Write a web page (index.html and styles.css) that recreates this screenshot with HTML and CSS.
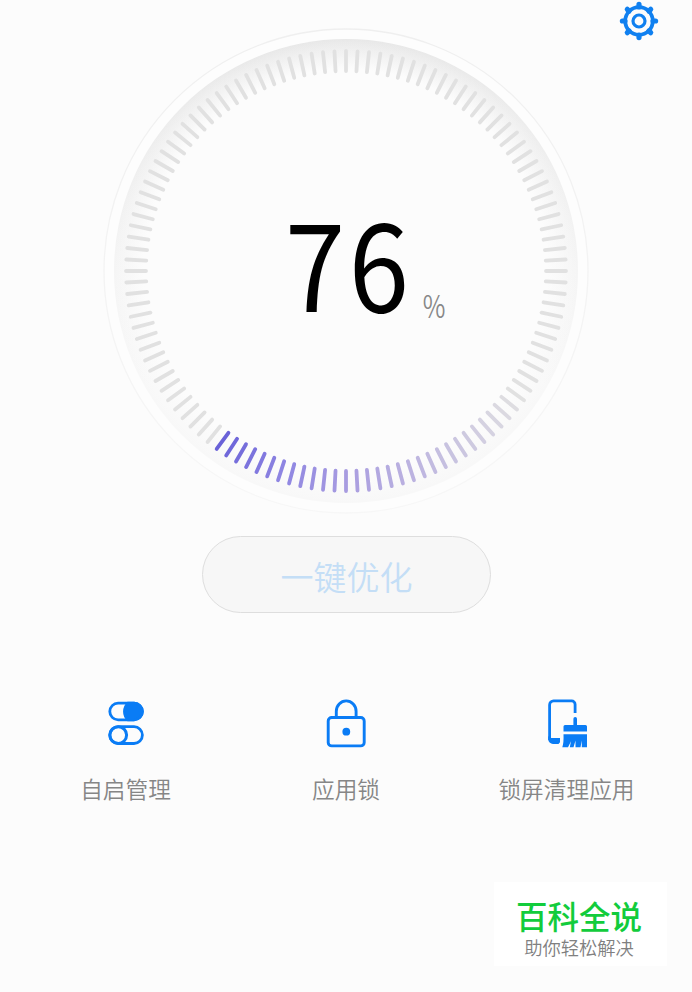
FILE: index.html
```html
<!DOCTYPE html>
<html lang="zh-CN">
<head>
    <meta charset="UTF-8">
    <meta name="viewport" content="width=device-width, initial-scale=1.0">
    <title>一键优化</title>
    <link rel="stylesheet" href="styles.css">
</head>
<body>
    <header class="topbar">
        <svg class="gear" viewBox="0 0 40 40" fill="none" stroke="#1080f0">
            <path d="M20 3.4V6M20 34v2.6M3.4 20H6M34 20h2.6M8.3 8.3l1.8 1.8M29.9 29.9l1.8 1.8M8.3 31.7l1.8-1.8M29.9 10.1l1.8-1.8" stroke-width="5.2" stroke-linecap="round"/>
            <circle cx="20" cy="20" r="13.8" stroke-width="3.8"/>
            <circle cx="20" cy="20" r="6" stroke-width="3.2"/>
        </svg>
    </header>

    <main>
        <div class="dial">
            <svg class="dial-face" viewBox="-243 -243 486 486">
                <defs>
                    <linearGradient id="shade" x1="0" y1="0" x2="0" y2="1">
                        <stop offset="0" stop-color="#e8e8e8"/>
                        <stop offset="0.5" stop-color="#f5f5f5"/>
                        <stop offset="0.75" stop-color="#f8f8f8"/>
                        <stop offset="1" stop-color="#f8f8f8"/>
                    </linearGradient>
                    <radialGradient id="inner" gradientUnits="userSpaceOnUse" cx="0" cy="0" r="232">
                        <stop offset="0.87" stop-color="#fcfcfc"/>
                        <stop offset="1" stop-color="#fcfcfc" stop-opacity="0"/>
                    </radialGradient>
                    <linearGradient id="rim" x1="0" y1="0" x2="0" y2="1">
                        <stop offset="0" stop-color="#efefef"/>
                        <stop offset="1" stop-color="#f7f7f7"/>
                    </linearGradient>
                </defs>
                <circle r="242" fill="#fdfdfd" stroke="url(#rim)" stroke-width="1.3"/>
                <circle r="232" fill="url(#shade)"/>
                <circle r="232.5" fill="url(#inner)"/>
                <g id="ticks" class="ticks"></g>
            </svg>
            <div class="score">
                <span class="value">76</span>
                <span class="unit">%</span>
            </div>
        </div>

        <button class="optimize">一键优化</button>

        <nav class="tools">
            <div class="tool">
                <svg viewBox="0 0 48 52" fill="none" stroke="#0a7cf5" stroke-width="2.8">
                    <rect x="7.8" y="5.2" width="32.6" height="16.6" rx="8.3"/>
                    <path d="M26 5.2a11.5 11.5 0 0 0 0 16.6h6.1a8.3 8.3 0 0 0 0-16.6z" fill="#0a7cf5"/>
                    <rect x="7.8" y="28.7" width="32.6" height="16.8" rx="8.4"/>
                    <circle cx="16.2" cy="37.1" r="8.4" stroke-width="3"/>
                </svg>
                <span>自启管理</span>
            </div>
            <div class="tool">
                <svg viewBox="0 0 48 52" fill="none" stroke="#0a7cf5" stroke-width="2.9">
                    <rect x="6.2" y="19.5" width="36" height="28.4" rx="3.5"/>
                    <path d="M14.3 19.5v-6.2a9.9 10.4 0 0 1 19.8 0v6.2"/>
                    <circle cx="24.3" cy="33.7" r="3.9" fill="#0a7cf5" stroke="none"/>
                </svg>
                <span>应用锁</span>
            </div>
            <div class="tool">
                <svg viewBox="0 0 48 52" fill="#0a7cf5">
                    <path d="M32.1 15V6.400a3.500 3.500 0 0 0-3.500-3.500H10.600A4 4 0 0 0 6.600 6.900V42" fill="none" stroke="#0a7cf5" stroke-width="2.8"/>
                    <path d="M5.200 38a4 4 0 0 0 4 2H17v4.300l-1.500 1.700H10a4.800 4.800 0 0 1-4.800-4.800z"/>
                    <path d="M30.400 20.700a1.800 1.800 0 0 1 3.600 0V27h8.500q1.500 0 1.500 1.500v5.100H20.500v-5.100q0-1.500 1.500-1.500h8.400z"/>
                    <path d="M20.500 36.300H44v13h-5.200v-6.800l-1.300 6.800h-5v-6.800l-2 6.800h-3.700l1.200-6-3 6h-5.700q1.600-5 1.200-13z"/>
                </svg>
                <span>锁屏清理应用</span>
            </div>
        </nav>
    </main>

    <footer class="brand">
        <strong>百科全说</strong>
        <span>助你轻松解决</span>
    </footer>

    <script>
        const ticks = document.getElementById('ticks');
        const count = 120;
        const grey = [225, 225, 225];
        // colour stops, in ticks measured from the start of the coloured arc
        const stops = [
            [0, [106, 98, 216]],
            [6, [142, 133, 226]],
            [13, [172, 160, 224]],
            [20, [194, 187, 224]],
            [30, grey]
        ];

        function tickColor(n) {
            if (n < 0 || n >= 30) return grey;
            for (let i = 1; i < stops.length; i++) {
                if (n <= stops[i][0]) {
                    const a = stops[i - 1], b = stops[i];
                    const t = (n - a[0]) / (b[0] - a[0]);
                    return a[1].map((c, k) => Math.round(c + (b[1][k] - c) * t));
                }
            }
        }

        // tick 0 is at the bottom, negative goes clockwise
        for (let i = -60; i < 60; i++) {
            const line = document.createElementNS('http://www.w3.org/2000/svg', 'line');
            line.setAttribute('y1', 200);
            line.setAttribute('y2', 220);
            line.setAttribute('transform', `rotate(${-i * 360 / count})`);
            line.setAttribute('stroke', `rgb(${tickColor(i + 12)})`);
            ticks.appendChild(line);
        }
    </script>
</body>
</html>
```
FILE: styles.css
```css
* {
    box-sizing: border-box;
}
body {
    margin: 0;
    height: 992px;
    display: flex;
    flex-direction: column;
    background: #fcfcfc;
    font-family: "Noto Sans CJK SC", sans-serif;
    overflow: hidden;
}
.topbar {
    height: 28px;
    padding: 1px 33px 0 0;
    display: flex;
    justify-content: flex-end;
    align-items: flex-start;
}
.gear {
    width: 40px;
    height: 40px;
    flex: none;
}
main {
    display: flex;
    flex-direction: column;
    align-items: center;
}
.dial {
    display: grid;
    width: 486px;
    height: 486px;
}
.dial-face,
.score {
    grid-area: 1 / 1;
}
.dial-face {
    width: 486px;
    height: 486px;
}
.ticks {
    stroke-width: 3.8px;
    stroke-linecap: round;
}
.score {
    display: flex;
    align-items: baseline;
    padding: 145px 0 0 182px;
    line-height: 174px;
}
.value {
    width: 132px;
    font-size: 119px;
    letter-spacing: 4px;
    color: #000;
    transform: scaleX(0.91);
    transform-origin: left;
}
.unit {
    margin-left: 3px;
    font-size: 31px;
    font-weight: 350;
    color: #888;
    transform: scaleX(0.8) translateY(6px);
}
.optimize {
    width: 289px;
    height: 77px;
    margin-top: 22px;
    padding: 2px 0 0 1px;
    border: 1.5px solid #dedede;
    border-radius: 39px;
    background: #f7f7f7;
    color: #c4def6;
    font-family: inherit;
    font-size: 33px;
    font-weight: 350;
}
.tools {
    display: grid;
    grid-template-columns: repeat(3, 220.5px);
    margin-top: 85px;
}
.tool {
    display: flex;
    flex-direction: column;
    align-items: center;
    font-size: 22.7px;
    font-weight: 350;
    line-height: 34px;
    color: #868686;
}
.tool svg {
    width: 48px;
    height: 52px;
    margin-bottom: 22px;
}
.brand {
    width: 173px;
    height: 84px;
    margin: auto 25px 26px auto;
    padding: 14px 3px 0 0;
    display: flex;
    flex-direction: column;
    align-items: center;
    background: #fff;
}
.brand strong {
    font-size: 31.5px;
    font-weight: 500;
    line-height: 39px;
    color: #12cc3c;
}
.brand span {
    font-size: 18.3px;
    font-weight: 350;
    line-height: 24px;
    color: #808080;
}
```
